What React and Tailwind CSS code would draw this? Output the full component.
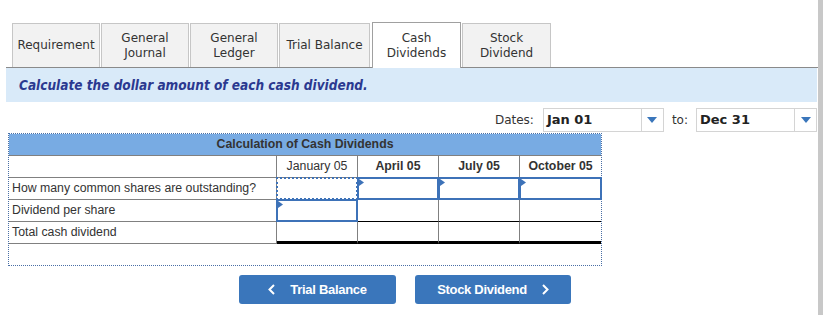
import { useState } from 'react'

const verdana = { fontFamily: '"DejaVu Sans", Verdana, sans-serif' }
const arial = { fontFamily: '"Liberation Sans", Arial, sans-serif' }

const tabs = [
  { label: ['Requirement'], w: 'w-[88px]' },
  { label: ['General', 'Journal'], w: 'w-[88px]' },
  { label: ['General', 'Ledger'], w: 'w-[88px]' },
  { label: ['Trial Balance'], w: 'w-[91px]' },
  { label: ['Cash', 'Dividends'], w: 'w-[89px]', active: true },
  { label: ['Stock', 'Dividend'], w: 'w-[89px]' },
]

const columns = [
  { name: 'January 05', bold: false },
  { name: 'April 05', bold: true },
  { name: 'July 05', bold: true },
  { name: 'October 05', bold: true },
]

function Marker() {
  return (
    <svg className="absolute left-0 top-0" width="5" height="7" viewBox="0 0 5 7">
      <path d="M0 0 L5 3.5 L0 7 Z" fill="#3d72b8" />
    </svg>
  )
}

function InputBox({ focused, marker }) {
  return (
    <div
      className={`absolute inset-[-1px] border-2 border-[#3d72b8] ${focused ? 'border-dotted' : 'border-solid'}`}
    >
      {marker && <Marker />}
    </div>
  )
}

function SelectBox({ value }) {
  return (
    <div className="flex h-[24px] w-[121px] border border-[#d4d4d4] bg-white">
      <div className="flex flex-1 items-center pl-[3px] text-[13px] font-bold text-[#222]" style={verdana}>
        {value}
      </div>
      <div className="flex w-[22px] items-center justify-center border-l border-[#d4d4d4]">
        <svg width="10" height="6" viewBox="0 0 10 6">
          <path d="M0 0 L10 0 L5 6 Z" fill="#3a76bb" />
        </svg>
      </div>
    </div>
  )
}

export default function App() {
  const [activeTab] = useState(4)

  const cellBorder = 'border-r border-[#808080]'

  return (
    <div className="flex h-[315px] w-[823px] overflow-hidden bg-white">
      <div className="w-[818px] pl-[6px] pt-[22px]">
        {/* tabs */}
        <div className="flex h-[46px] items-end gap-[1px] border-b border-[#8a8a8a] pl-[6px]">
          {tabs.map((t, i) => (
            <div
              key={i}
              className={`${t.w} flex flex-col items-center justify-center text-[12px] leading-[15px] text-[#333] ${
                i === activeTab
                  ? 'ml-px -mb-px h-[46px] border border-b-0 border-[#a0a0a0] bg-white'
                  : 'h-[44px] border border-b-0 border-[#c6c6c6] bg-[#f2f2f2]'
              }`}
              style={verdana}
            >
              {t.label.map((l) => (
                <span key={l}>{l}</span>
              ))}
            </div>
          ))}
        </div>

        {/* instructions */}
        <div className="flex h-[34px] w-[811px] items-center bg-[#d9eaf9] pl-[13px]">
          <span
            className="text-[13.5px] font-bold italic text-[#2b3990]"
            style={{ fontFamily: '"DejaVu Sans Condensed", "DejaVu Sans", Verdana, sans-serif' }}
          >
            Calculate the dollar amount of each cash dividend.
          </span>
        </div>

        {/* dates */}
        <div className="mt-[6px] flex w-[811px] items-center justify-end text-[12px] text-[#333]" style={verdana}>
          <span className="mr-[9px]">Dates:</span>
          <SelectBox value="Jan 01" />
          <span className="ml-[8px] mr-[8px]">to:</span>
          <SelectBox value="Dec 31" />
        </div>

        {/* calculation table */}
        <div className="ml-[2px] mt-[1px] w-[594px] border border-dotted border-[#4a6fa5] text-[12.3px] text-[#333]" style={arial}>
          <div className="flex h-[21px] items-center justify-center bg-[#78abe3] font-bold">
            Calculation of Cash Dividends
          </div>

          <div className="flex h-[22px] border-t border-[#808080]">
            <div className={`w-[268px] ${cellBorder}`} />
            {columns.map((c, i) => (
              <div
                key={c.name}
                className={`flex w-[81px] items-center justify-center ${i < 3 ? cellBorder : ''} ${c.bold ? 'font-bold' : ''}`}
              >
                {c.name}
              </div>
            ))}
          </div>

          <div className="flex h-[22px] border-t border-[#808080]">
            <div className={`flex w-[268px] items-center pl-[3px] ${cellBorder}`}>
              How many common shares are outstanding?
            </div>
            {columns.map((c, i) => (
              <div key={c.name} className={`relative w-[81px] ${i < 3 ? cellBorder : ''}`}>
                <InputBox focused={i === 0} marker={i !== 0} />
              </div>
            ))}
          </div>

          <div className="flex h-[22px] border-t border-[#808080]">
            <div className={`flex w-[268px] items-center pl-[3px] ${cellBorder}`}>Dividend per share</div>
            {columns.map((c, i) => (
              <div key={c.name} className={`relative w-[81px] ${i < 3 ? cellBorder : ''}`}>
                {i === 0 && <InputBox marker />}
              </div>
            ))}
          </div>

          <div className="flex h-[23px]">
            <div className={`flex w-[268px] items-center border-y border-[#808080] pl-[3px] ${cellBorder}`}>
              Total cash dividend
            </div>
            {columns.map((c, i) => (
              <div
                key={c.name}
                className={`w-[81px] border-t border-b-[3px] border-t-black border-b-black ${i < 3 ? cellBorder : ''}`}
              />
            ))}
          </div>

          <div className="h-[21px]" />
        </div>

        {/* navigation */}
        <div className="mt-[9px] flex gap-[19px] pl-[233px] text-[13px] font-bold tracking-[-0.3px] text-white" style={arial}>
          <button className="flex h-[29px] w-[157px] items-center justify-center gap-[15px] rounded-[3px] bg-[#3a76bb]">
            <svg width="7" height="11" viewBox="0 0 7 11">
              <path d="M6 1 L1.5 5.5 L6 10" fill="none" stroke="white" strokeWidth="2" />
            </svg>
            <span>Trial Balance</span>
          </button>
          <button className="flex h-[29px] w-[156px] items-center justify-center gap-[15px] rounded-[3px] bg-[#3a76bb]">
            <span>Stock Dividend</span>
            <svg width="7" height="11" viewBox="0 0 7 11">
              <path d="M1 1 L5.5 5.5 L1 10" fill="none" stroke="white" strokeWidth="2" />
            </svg>
          </button>
        </div>
      </div>
      <div className="h-full w-[5px] bg-[#c8c8c8]" />
    </div>
  )
}
